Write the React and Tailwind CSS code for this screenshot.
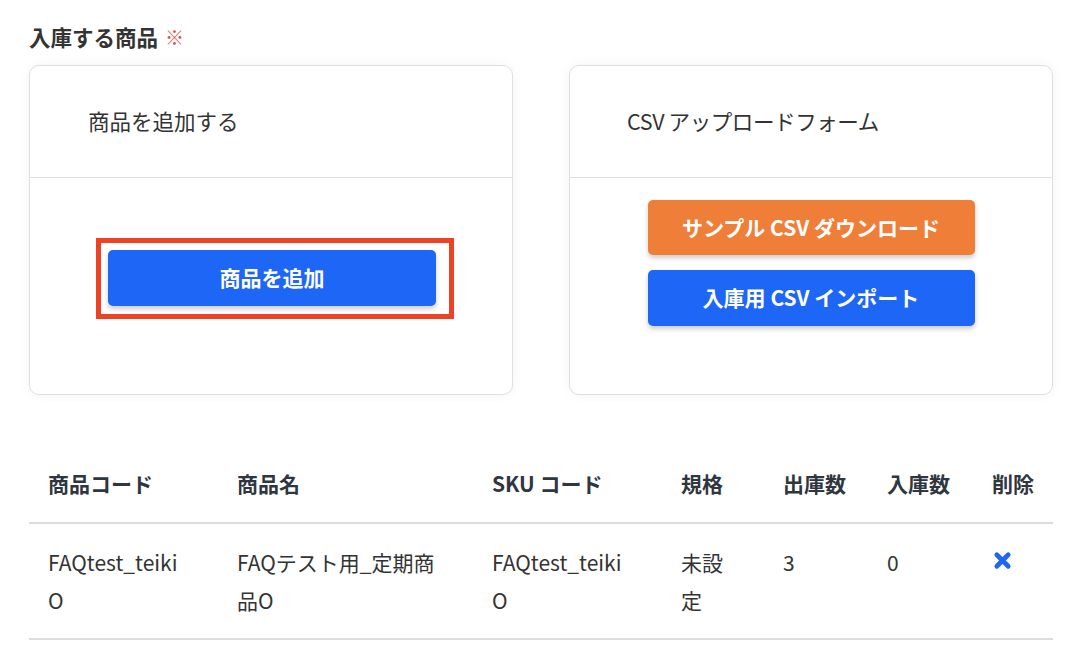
import React from "react";

const font = { fontFamily: '"Noto Sans CJK JP", "Noto Sans", sans-serif' };

function XIcon() {
  return (
    <svg width="19" height="19" viewBox="0 0 20 20" className="block">
      <path d="M4 4 L16 16 M16 4 L4 16" stroke="#1e66f5" strokeWidth="5" strokeLinecap="round" />
    </svg>
  );
}

export default function App() {
  return (
    <div className="w-[1090px] h-[654px] bg-white overflow-hidden text-[#333333]" style={font}>
      <div className="pl-[29px] w-[1053px] pt-[22px]">
        <div className="flex items-center h-[30px] leading-[30px]">
          <span className="text-[21.5px] font-bold text-[#333333]">入庫する商品</span>
          <span className="ml-[7px] text-[19px] text-[#d9534f]">※</span>
        </div>

        <div className="mt-[13px] flex gap-[56px]">
          <div className="w-[484px] h-[330px] rounded-[10px] border border-[#dfe0e6] bg-white shadow-[0_0_12px_rgba(0,0,0,0.05)] flex flex-col">
            <div className="h-[112px] flex items-center pl-[58px] border-b-[1.5px] border-[#dfe0e6] text-[21.5px] text-[#333333]">
              商品を追加する
            </div>
            <div className="flex justify-center pt-[60px]">
              <div className="ml-[8px] border-[5px] border-[#ee4224] pl-[7px] pr-[13px] pt-[7px] pb-[8px]">
                <button className="w-[328px] h-[56px] rounded-[5px] bg-[#1e66f5] text-white text-[21px] font-bold shadow-[0_3px_5px_rgba(0,0,0,0.2)]">
                  商品を追加
                </button>
              </div>
            </div>
          </div>

          <div className="w-[484px] h-[330px] rounded-[10px] border border-[#dfe0e6] bg-white shadow-[0_0_12px_rgba(0,0,0,0.05)] flex flex-col">
            <div className="h-[112px] flex items-center pl-[57px] border-b-[1.5px] border-[#dfe0e6] text-[21.5px] tracking-[-0.4px] text-[#333333]">
              CSV アップロードフォーム
            </div>
            <div className="flex flex-col items-center pt-[22px] gap-[15px]">
              <button className="w-[327px] h-[55px] rounded-[5px] bg-[#ef7e38] text-white text-[21px] font-bold shadow-[0_3px_5px_rgba(0,0,0,0.2)]">
                サンプル CSV ダウンロード
              </button>
              <button className="w-[327px] h-[56px] rounded-[5px] bg-[#1e66f5] text-white text-[21px] font-bold shadow-[0_3px_5px_rgba(0,0,0,0.2)]">
                入庫用 CSV インポート
              </button>
            </div>
          </div>
        </div>

        <table className="mt-[69px] w-[1024px] table-fixed border-collapse text-[21px] leading-[38px]">
          <colgroup>
            <col className="w-[189px]" />
            <col className="w-[255px]" />
            <col className="w-[189px]" />
            <col className="w-[102px]" />
            <col className="w-[104px]" />
            <col className="w-[105px]" />
            <col className="w-[80px]" />
          </colgroup>
          <thead>
            <tr className="border-b-2 border-[#dddddd] text-left text-[#2f3640]">
              <th className="pl-[19px] pb-[20px] font-bold">商品コード</th>
              <th className="pl-[19px] pb-[20px] font-bold">商品名</th>
              <th className="pl-[19px] pb-[20px] font-bold">SKU コード</th>
              <th className="pl-[19px] pb-[20px] font-bold">規格</th>
              <th className="pl-[19px] pb-[20px] font-bold">出庫数</th>
              <th className="pl-[19px] pb-[20px] font-bold">入庫数</th>
              <th className="pl-[19px] pb-[20px] font-bold">削除</th>
            </tr>
          </thead>
          <tbody>
            <tr className="border-b-2 border-[#dddddd] align-top text-[#333333]">
              <td className="pl-[19px] pt-[19px] pb-[19px]">
                <div className="w-[140px] break-all">FAQtest_teikiO</div>
              </td>
              <td className="pl-[19px] pt-[19px] pb-[19px]">
                <div className="w-[210px] break-all">FAQテスト用_定期商品O</div>
              </td>
              <td className="pl-[19px] pt-[19px] pb-[19px]">
                <div className="w-[140px] break-all">FAQtest_teikiO</div>
              </td>
              <td className="pl-[19px] pt-[19px] pb-[19px]">
                <div className="w-[54px]">未設定</div>
              </td>
              <td className="pl-[19px] pt-[19px] pb-[19px]">3</td>
              <td className="pl-[19px] pt-[19px] pb-[19px]">0</td>
              <td className="pl-[19px] pt-[19px] pb-[19px]">
                <div className="pt-[8px] pl-[1px]">
                  <XIcon />
                </div>
              </td>
            </tr>
          </tbody>
        </table>
      </div>
    </div>
  );
}
